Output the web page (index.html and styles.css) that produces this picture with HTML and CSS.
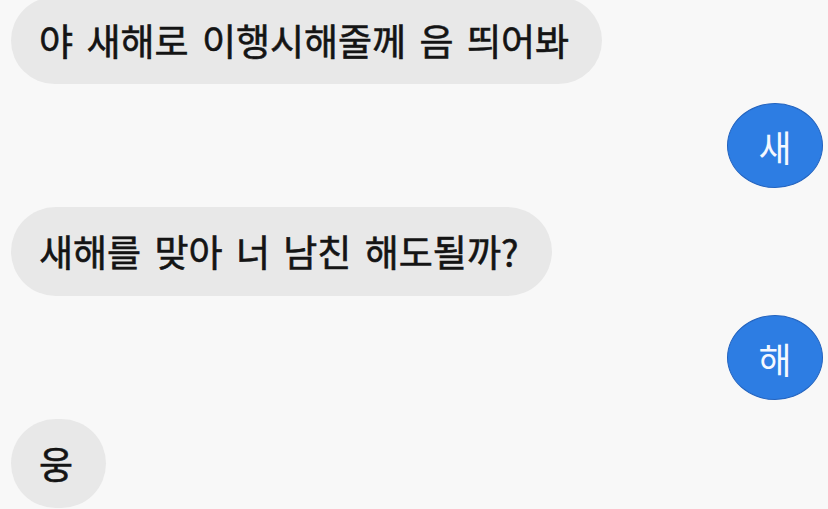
FILE: index.html
```html
<!DOCTYPE html>
<html lang="ko">
<head>
  <meta charset="UTF-8">
  <meta name="viewport" content="width=device-width, initial-scale=1.0">
  <title>새해 이행시</title>
  <link rel="stylesheet" href="styles.css">
</head>
<body>

  <div class="chat">
    <div class="msg received first">야 새해로 이행시해줄께 음 띄어봐</div>
    <div class="msg sent">새</div>
    <div class="msg received">새해를 맞아 너 남친 해도될까?</div>
    <div class="msg sent">해</div>
    <div class="msg received">웅</div>
  </div>

</body>
</html>
```

FILE: styles.css
```css
body {
  margin: 0;
  background-color: #f8f8f8;
  font-family: "Noto Sans CJK KR", "Noto Sans", sans-serif;
  overflow: hidden;
}

.chat {
  display: flex;
  flex-direction: column;
  gap: 19px;
  padding: 1px 5px 0 11px;
}

.msg {
  display: flex;
  align-items: center;
  font-size: 37px;
  line-height: 1;
}

.received {
  align-self: flex-start;
  height: 89px;
  padding: 0 33px 0 28px;
  border-radius: 45px;
  background-color: #e8e8e8;
  color: #141414;
  -webkit-text-stroke: 0.6px #141414;
  word-spacing: 3px;
}

.received.first {
  height: 87px;
  margin-top: -4px;
}

.sent {
  align-self: flex-end;
  justify-content: center;
  width: 96px;
  height: 85px;
  border-radius: 50%;
  background-color: #2d7de3;
  border: 1px solid #2464bf;
  box-sizing: border-box;
  color: #f4f8ff;
  font-size: 36px;
}
```
